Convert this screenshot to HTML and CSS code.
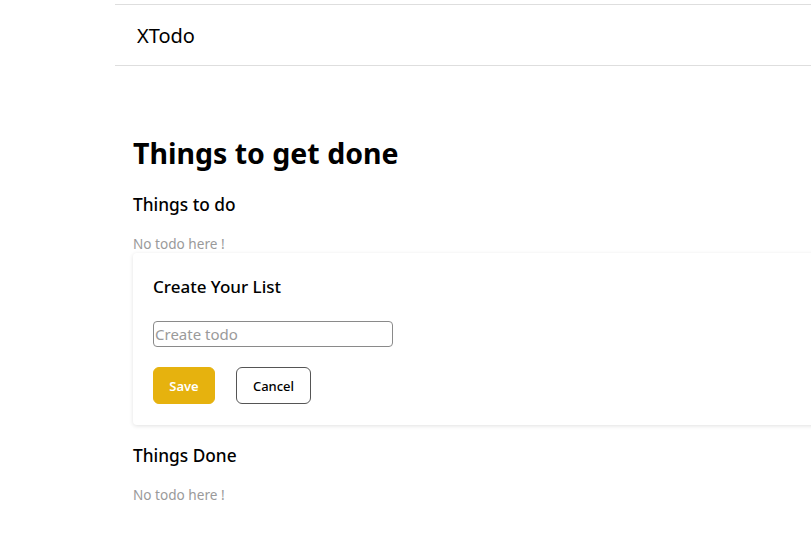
FILE: index.html
```html
<!DOCTYPE html>
<html>
<head>
<meta charset="utf-8">
<link rel="stylesheet" href="styles.css">
</head>
<body>
<div class="page">
  <header class="topbar">
    <span class="brand">XTodo</span>
  </header>
  <main class="content">
    <h1 class="title">Things to get done</h1>
    <h2 class="section">Things to do</h2>
    <p class="empty">No todo here !</p>
    <div class="card">
      <h3 class="card-title">Create Your List</h3>
      <input class="todo-input" type="text" placeholder="Create todo">
      <div class="actions">
        <button class="btn btn-save">Save</button>
        <button class="btn btn-cancel">Cancel</button>
      </div>
    </div>
    <h2 class="section section-done">Things Done</h2>
    <p class="empty">No todo here !</p>
  </main>
</div>
</body>
</html>
```
FILE: styles.css
```css
html, body {
  margin: 0;
  padding: 0;
  background: #fff;
  overflow: hidden;
}
body {
  font-family: "Noto Sans", "Open Sans", sans-serif;
  color: #000;
}
.page {
  padding-top: 4px;
  margin-left: 115px;
}
.topbar {
  height: 60px;
  border-top: 1px solid #dedede;
  border-bottom: 1px solid #dedede;
  display: flex;
  align-items: center;
  padding-left: 22px;
}
.brand {
  font-size: 20px;
}
.content {
  padding-left: 18px;
  padding-top: 65px;
  overflow: hidden;
}
.title {
  margin: 0;
  font-size: 28.5px;
  font-weight: 700;
  line-height: 44px;
}
.section {
  margin: 17px 0 0;
  font-size: 17.3px;
  font-weight: 500;
  line-height: 26px;
}
.empty {
  margin: 17px 0 0;
  font-size: 13.6px;
  color: #9a9a9a;
  line-height: 18px;
}
.card {
  margin-top: 0;
  margin-right: -20px;
  height: 172px;
  box-sizing: border-box;
  padding: 22px 20px;
  box-shadow: 0 1px 4px rgba(0,0,0,0.12);
  border-radius: 4px;
}
.card-title {
  margin: 0;
  font-size: 17px;
  font-weight: 500;
  line-height: 24px;
}
.todo-input {
  display: block;
  margin-top: 22px;
  width: 240px;
  height: 26px;
  box-sizing: border-box;
  border: 1px solid #8a8a8a;
  border-radius: 4px;
  padding: 0 1px;
  font-family: inherit;
  font-size: 15px;
}
.todo-input::placeholder {
  color: #9a9a9a;
}
.actions {
  display: flex;
  gap: 21px;
  margin-top: 20px;
}
.btn {
  height: 37px;
  border-radius: 6px;
  font-family: inherit;
  font-size: 13px;
  font-weight: 600;
  cursor: pointer;
}
.btn-save {
  width: 62px;
  background: #e6b20e;
  color: #fff;
  border: 1px solid #e6b20e;
}
.btn-cancel {
  width: 75px;
  background: #fff;
  color: #000;
  border: 1px solid #555;
  font-weight: 500;
}
.section-done {
  margin-top: 18px;
}
```
